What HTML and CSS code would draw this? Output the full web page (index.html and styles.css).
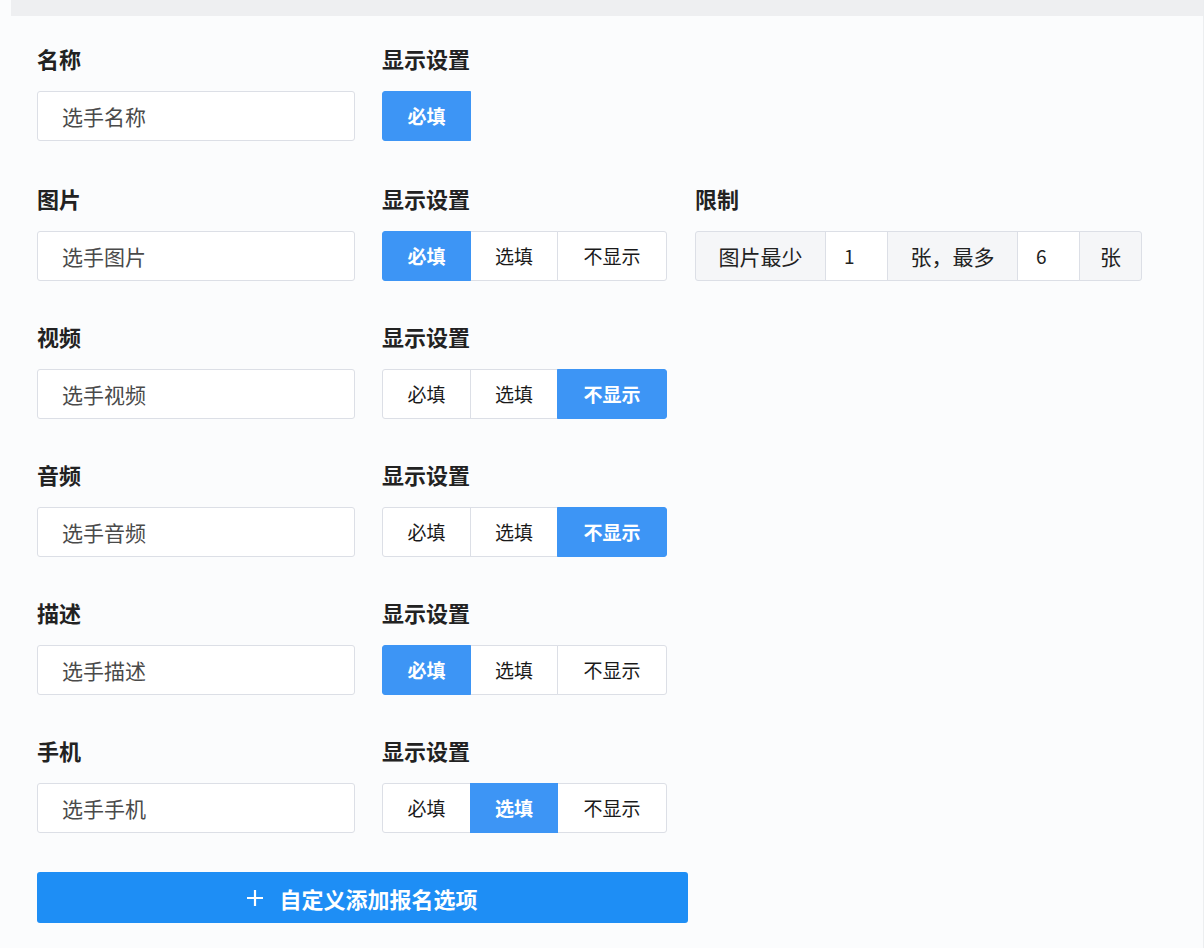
FILE: index.html
```html
<!DOCTYPE html>
<html lang="zh">
<head>
<meta charset="utf-8">
<link rel="stylesheet" href="styles.css">
</head>
<body>
<div class="page">
  <div class="topbar"></div>
  <div class="form">
    <div class="row first">
      <div class="field">
        <div class="label">名称</div>
        <div class="input">选手名称</div>
      </div>
      <div class="field">
        <div class="label">显示设置</div>
        <div class="seg">
          <span class="opt active">必填</span>
        </div>
      </div>
    </div>

    <div class="row">
      <div class="field">
        <div class="label">图片</div>
        <div class="input">选手图片</div>
      </div>
      <div class="field">
        <div class="label">显示设置</div>
        <div class="seg">
          <span class="opt active">必填</span><span class="opt">选填</span><span class="opt wide">不显示</span>
        </div>
      </div>
      <div class="field">
        <div class="label">限制</div>
        <div class="limit">
          <span class="addon w130">图片最少</span><span class="num">1</span><span class="addon w130">张，最多</span><span class="num">6</span><span class="addon w62">张</span>
        </div>
      </div>
    </div>

    <div class="row">
      <div class="field">
        <div class="label">视频</div>
        <div class="input">选手视频</div>
      </div>
      <div class="field">
        <div class="label">显示设置</div>
        <div class="seg">
          <span class="opt">必填</span><span class="opt">选填</span><span class="opt wide active">不显示</span>
        </div>
      </div>
    </div>

    <div class="row">
      <div class="field">
        <div class="label">音频</div>
        <div class="input">选手音频</div>
      </div>
      <div class="field">
        <div class="label">显示设置</div>
        <div class="seg">
          <span class="opt">必填</span><span class="opt">选填</span><span class="opt wide active">不显示</span>
        </div>
      </div>
    </div>

    <div class="row">
      <div class="field">
        <div class="label">描述</div>
        <div class="input">选手描述</div>
      </div>
      <div class="field">
        <div class="label">显示设置</div>
        <div class="seg">
          <span class="opt active">必填</span><span class="opt">选填</span><span class="opt wide">不显示</span>
        </div>
      </div>
    </div>

    <div class="row">
      <div class="field">
        <div class="label">手机</div>
        <div class="input">选手手机</div>
      </div>
      <div class="field">
        <div class="label">显示设置</div>
        <div class="seg">
          <span class="opt">必填</span><span class="opt active">选填</span><span class="opt wide">不显示</span>
        </div>
      </div>
    </div>

    <button class="add">
      <svg class="plus" viewBox="0 0 16 16" width="16" height="16"><path d="M8 0v16M0 8h16" stroke="#fff" stroke-width="2.2" fill="none"/></svg>
      <span>自定义添加报名选项</span>
    </button>
  </div>
</div>
</body>
</html>
```

FILE: styles.css
```css
* { box-sizing: border-box; }
html, body {
  margin: 0;
  padding: 0;
  background: #fbfcfd;
  font-family: "Noto Sans CJK SC", "Noto Sans", sans-serif;
  color: #1f1f1f;
}
.page {
  width: 1204px;
  height: 948px;
  overflow: hidden;
  padding-left: 11px;
  border-right: 1px solid #eceef0;
}
.topbar {
  height: 16px;
  background: #eeeff1;
}
.form {
  padding: 30px 0 0 26px;
}
.row {
  display: grid;
  grid-template-columns: 318px 286px auto;
  column-gap: 27px;
  margin-bottom: 43px;
}
.row.first { margin-bottom: 45px; }
.field {
  display: flex;
  flex-direction: column;
  gap: 21px;
}
.label {
  height: 24px;
  line-height: 24px;
  font-size: 22px;
  font-weight: 700;
  color: #222;
}
.input {
  height: 50px;
  line-height: 48px;
  border: 1px solid #dcdfe6;
  border-radius: 3px;
  background: #fff;
  padding-left: 24px;
  font-size: 21px;
  color: #4a4a4a;
}
.seg {
  display: flex;
  height: 50px;
}
.opt {
  width: 88px;
  height: 50px;
  line-height: 48px;
  text-align: center;
  font-size: 19px;
  color: #1a1a1a;
  background: #fff;
  border: 1px solid #dcdfe6;
  margin-left: -1px;
}
.opt:first-child { margin-left: 0; width: 89px; border-radius: 3px 0 0 3px; }
.opt.wide { width: 110px; border-radius: 0 3px 3px 0; }
.opt.active {
  background: #3d95f5;
  border-color: #3d95f5;
  color: #fff;
  font-weight: 700;
  position: relative;
}
.limit {
  display: flex;
  height: 50px;
}
.limit > span {
  height: 50px;
  line-height: 48px;
  border: 1px solid #dcdfe6;
  margin-left: -1px;
  font-size: 21px;
  color: #222;
}
.limit > span:first-child { margin-left: 0; border-radius: 3px 0 0 3px; }
.limit > span:last-child { border-radius: 0 3px 3px 0; }
.addon {
  background: #f5f6f8;
  text-align: center;
}
.w130 { width: 131px; }
.w62 { width: 63px; }
.num {
  width: 63px;
  background: #fff;
  padding-left: 18px;
  font-size: 19px !important;
}
.add {
  display: flex;
  align-items: center;
  justify-content: center;
  gap: 16px;
  width: 651px;
  height: 51px;
  margin-top: -4px;
  border: none;
  border-radius: 3px;
  background: #1e8ef5;
  color: #fff;
  font-family: "Noto Sans CJK SC", "Noto Sans", sans-serif;
  font-size: 22px;
  font-weight: 700;
  cursor: pointer;
}
.plus { display: block; }
```
